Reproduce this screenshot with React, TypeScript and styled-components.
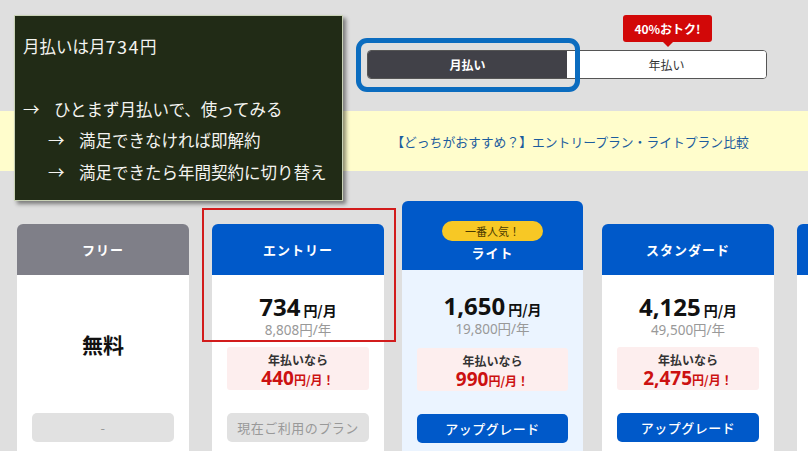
import styled, { createGlobalStyle } from "styled-components";

const GlobalStyle = createGlobalStyle`
  html, body {
    margin: 0;
    padding: 0;
    background: #dfdfdf;
  }
  body {
    font-family: "Noto Sans", "Noto Sans CJK JP", sans-serif;
  }
`;

const Page = styled.div`
  position: relative;
  width: 808px;
  height: 451px;
  overflow: hidden;
  background: #dfdfdf;
`;

const TopArea = styled.div`
  padding: 50px 0 0 367px;
  height: 111px;
  box-sizing: border-box;
`;

const ToggleWrap = styled.div`
  position: relative;
  width: 400px;
`;

const Toggle = styled.div`
  display: flex;
  height: 29px;
  border: 1px solid #555;
  border-radius: 4px;
  overflow: hidden;
  box-sizing: border-box;
  background: #fff;
`;

const ToggleOption = styled.div<{ $active?: boolean }>`
  flex: 1;
  display: flex;
  align-items: center;
  justify-content: center;
  font-family: "Noto Sans CJK JP", sans-serif;
  font-size: 12px;
  font-weight: ${({ $active }) => ($active ? 700 : 400)};
  color: ${({ $active }) => ($active ? "#fff" : "#333")};
  background: ${({ $active }) => ($active ? "#414148" : "#fff")};
`;

const Highlight = styled.div`
  position: absolute;
  left: -11px;
  top: -12px;
  width: 224px;
  height: 54px;
  border: 5px solid #0b6cbf;
  border-radius: 11px;
  box-sizing: border-box;
  pointer-events: none;
`;

const Badge = styled.div`
  position: absolute;
  left: 256px;
  top: -35px;
  width: 89px;
  height: 27px;
  border-radius: 3px;
  background: #d20808;
  color: #fff;
  font-family: "Noto Sans CJK JP", sans-serif;
  font-size: 12px;
  font-weight: 700;
  display: flex;
  align-items: center;
  justify-content: center;

  &::after {
    content: "";
    position: absolute;
    left: 50%;
    bottom: -5px;
    margin-left: -5px;
    border-left: 5px solid transparent;
    border-right: 5px solid transparent;
    border-top: 5px solid #d20808;
  }
`;

const Banner = styled.div`
  height: 60px;
  background: #fffdcc;
  display: flex;
  align-items: center;
  justify-content: center;
  padding-left: 332px;
  box-sizing: border-box;
`;

const BannerLink = styled.span`
  font-family: "Noto Sans CJK JP", sans-serif;
  font-size: 12.8px;
  color: #1c5c9e;
`;

const CardRow = styled.div`
  display: flex;
  align-items: flex-start;
  gap: 23px;
  padding: 30px 0 0 17px;
`;

const Card = styled.div<{ $featured?: boolean }>`
  flex: none;
  width: ${({ $featured }) => ($featured ? "181px" : "172px")};
  margin: ${({ $featured }) => ($featured ? "0 -4px 0 -5px" : "23px 0 0")};
  height: 260px;
  display: flex;
  flex-direction: column;
`;

const CardHead = styled.div<{ $tone: "gray" | "blue"; $tall?: boolean }>`
  flex: none;
  height: ${({ $tall }) => ($tall ? "69px" : "51px")};
  border-radius: 6px 6px 0 0;
  background: ${({ $tone }) => ($tone === "gray" ? "#7f7f88" : "#0059c9")};
  display: flex;
  flex-direction: column;
  align-items: center;
  justify-content: center;
  gap: 3px;
  padding-top: ${({ $tall }) => ($tall ? "12px" : "0")};
  box-sizing: border-box;
`;

const CardTitle = styled.div`
  color: #fff;
  font-family: "Noto Sans CJK JP", sans-serif;
  font-size: 13px;
  font-weight: 700;
  line-height: 18px;
  letter-spacing: 1px;
`;

const Popular = styled.div`
  width: 101px;
  height: 20px;
  border-radius: 10px;
  background: #f7c825;
  color: #4a3a00;
  font-family: "Noto Sans CJK JP", sans-serif;
  font-size: 11px;
  display: flex;
  align-items: center;
  justify-content: center;
`;

const CardBody = styled.div<{ $featured?: boolean; $top: number }>`
  flex: 1;
  background: ${({ $featured }) => ($featured ? "#ebf4ff" : "#fff")};
  padding: ${({ $top }) => $top}px 15px 0;
  display: flex;
  flex-direction: column;
  align-items: stretch;
`;

const PriceLine = styled.div`
  height: 30px;
  display: flex;
  align-items: baseline;
  justify-content: center;
  line-height: 30px;
  color: #111;
`;

const PriceNum = styled.span`
  font-family: "Noto Sans", "Noto Sans CJK JP", sans-serif;
  font-size: 24px;
  font-weight: 700;
  margin-right: 3px;
`;

const PriceUnit = styled.span`
  font-family: "Noto Sans CJK JP", sans-serif;
  font-size: 14px;
  font-weight: 700;
`;

const Yearly = styled.div`
  height: 16px;
  line-height: 16px;
  text-align: center;
  font-family: "Noto Sans", "Noto Sans CJK JP", sans-serif;
  font-size: 13.5px;
  color: #999;
`;

const Deal = styled.div<{ $gap: number }>`
  margin-top: ${({ $gap }) => $gap}px;
  height: 43px;
  background: #fdeeee;
  border-radius: 3px;
  padding-top: 4px;
  box-sizing: border-box;
  text-align: center;
`;

const DealLabel = styled.div`
  font-family: "Noto Sans CJK JP", sans-serif;
  font-size: 12px;
  font-weight: 700;
  color: #333;
  line-height: 17px;
`;

const DealPrice = styled.div`
  line-height: 20px;
  color: #cc1111;
  font-weight: 700;
  font-family: "Noto Sans", "Noto Sans CJK JP", sans-serif;
`;

const DealNum = styled.span`
  font-size: 19px;
`;

const DealUnit = styled.span`
  font-family: "Noto Sans CJK JP", sans-serif;
  font-size: 12px;
`;

const FreeLabel = styled.div`
  height: 138px;
  display: flex;
  align-items: center;
  justify-content: center;
  font-family: "Noto Sans CJK JP", sans-serif;
  font-size: 21px;
  font-weight: 700;
  color: #111;
`;

const PlanButton = styled.div<{ $kind: "muted" | "primary"; $gap: number }>`
  margin-top: ${({ $gap }) => $gap}px;
  height: 29px;
  border-radius: 5px;
  display: flex;
  align-items: center;
  justify-content: center;
  font-family: "Noto Sans CJK JP", sans-serif;
  font-size: 13px;
  font-weight: ${({ $kind }) => ($kind === "primary" ? 500 : 400)};
  letter-spacing: 0.5px;
  background: ${({ $kind }) => ($kind === "primary" ? "#0059c9" : "#e1e1e1")};
  color: ${({ $kind }) => ($kind === "primary" ? "#fff" : "#999")};
`;

const Note = styled.div`
  position: absolute;
  left: 14px;
  top: 15px;
  width: 329px;
  height: 186px;
  box-sizing: border-box;
  background: #212b16;
  border: 1px solid #c9d2b6;
  box-shadow: 3px 3px 4px rgba(0, 0, 0, 0.45);
  padding: 14px 0 0 8px;
  color: #f4f4f0;
  font-family: "Noto Sans CJK JP", sans-serif;
  font-size: 16.5px;
`;

const NoteLine = styled.div<{ $indent?: number }>`
  display: flex;
  height: 31.5px;
  align-items: center;
  padding-left: ${({ $indent }) => $indent ?? 0}px;
  white-space: nowrap;
`;

const NoteDigits = styled.span`
  font-size: 18px;
  letter-spacing: 1.5px;
`;

const Arrow = styled.span`
  width: 31px;
  flex: none;
`;

const RedFrame = styled.div`
  position: absolute;
  left: 202px;
  top: 208px;
  width: 194px;
  height: 134px;
  border: 2px solid #d21c1c;
  box-sizing: border-box;
  pointer-events: none;
`;

type Plan = {
  name: string;
  monthly: string;
  yearly: string;
  deal: string;
  featured?: boolean;
  current?: boolean;
};

const plans: Plan[] = [
  { name: "エントリー", monthly: "734", yearly: "8,808円/年", deal: "440", current: true },
  { name: "ライト", monthly: "1,650", yearly: "19,800円/年", deal: "990", featured: true },
  { name: "スタンダード", monthly: "4,125", yearly: "49,500円/年", deal: "2,475" },
];

const App = () => {
  return (
    <Page>
      <GlobalStyle />
      <TopArea>
        <ToggleWrap>
          <Toggle>
            <ToggleOption $active>月払い</ToggleOption>
            <ToggleOption>年払い</ToggleOption>
          </Toggle>
          <Badge>40%おトク!</Badge>
          <Highlight />
        </ToggleWrap>
      </TopArea>
      <Banner>
        <BannerLink>【どっちがおすすめ？】エントリープラン・ライトプラン比較</BannerLink>
      </Banner>
      <CardRow>
        <Card>
          <CardHead $tone="gray">
            <CardTitle>フリー</CardTitle>
          </CardHead>
          <CardBody $top={0}>
            <FreeLabel>無料</FreeLabel>
            <PlanButton $kind="muted" $gap={0}>
              -
            </PlanButton>
          </CardBody>
        </Card>
        {plans.map((plan) => (
          <Card key={plan.name} $featured={plan.featured}>
            <CardHead $tone="blue" $tall={plan.featured}>
              {plan.featured && <Popular>一番人気！</Popular>}
              <CardTitle>{plan.name}</CardTitle>
            </CardHead>
            <CardBody $featured={plan.featured} $top={plan.featured ? 21 : 17}>
              <PriceLine>
                <PriceNum>{plan.monthly}</PriceNum>
                <PriceUnit>円/月</PriceUnit>
              </PriceLine>
              <Yearly>{plan.yearly}</Yearly>
              <Deal $gap={plan.featured ? 11 : 9}>
                <DealLabel>年払いなら</DealLabel>
                <DealPrice>
                  <DealNum>{plan.deal}</DealNum>
                  <DealUnit>円/月！</DealUnit>
                </DealPrice>
              </Deal>
              <PlanButton $kind={plan.current ? "muted" : "primary"} $gap={23}>
                {plan.current ? "現在ご利用のプラン" : "アップグレード"}
              </PlanButton>
            </CardBody>
          </Card>
        ))}
        {/* next plan, only its left edge is in view */}
        <Card>
          <CardHead $tone="blue" />
          <CardBody $top={0} />
        </Card>
      </CardRow>
      <Note>
        <NoteLine>
          月払いは月<NoteDigits>734</NoteDigits>円
        </NoteLine>
        <NoteLine />
        <NoteLine>
          <Arrow>→</Arrow>ひとまず月払いで、使ってみる
        </NoteLine>
        <NoteLine $indent={25}>
          <Arrow>→</Arrow>満足できなければ即解約
        </NoteLine>
        <NoteLine $indent={25}>
          <Arrow>→</Arrow>満足できたら年間契約に切り替え
        </NoteLine>
      </Note>
      <RedFrame />
    </Page>
  );
};

export default App;
